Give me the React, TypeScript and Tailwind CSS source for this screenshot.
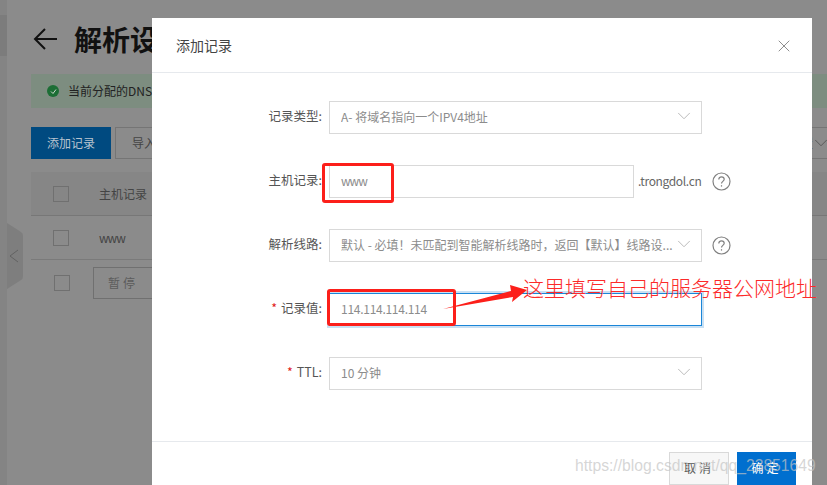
import { ChevronDown, X } from 'lucide-react'

const FONT = 'font-["Noto_Sans_CJK_SC","Liberation_Sans",sans-serif]'

function HelpIcon() {
  return (
    <svg width="19" height="19" viewBox="0 0 19 19" fill="none" stroke="#808080" strokeWidth="1.2">
      <circle cx="9.5" cy="9.5" r="8.5" />
      <path d="M6.8 7.4c0-1.6 1.2-2.6 2.7-2.6s2.7 1 2.7 2.4c0 2.2-2.7 2.2-2.7 4.4" />
      <path d="M9.5 13.2v1.4" />
    </svg>
  )
}

function FormRow({
  label,
  required,
  children
}: {
  label: string
  required?: boolean
  children: React.ReactNode
}) {
  return (
    <div className="flex h-[33px] items-center">
      <div className="flex w-[170px] shrink-0 items-center justify-end pb-[2px] pr-[7px] text-[12.5px] text-[#555]">
        {required && <span className="mr-1 text-[#e02020]">*</span>}
        {label}:
      </div>
      {children}
    </div>
  )
}

function SelectBox({ text }: { text: string }) {
  return (
    <div className="flex h-[33px] w-[373px] items-center justify-between border border-[#d9d9d9] pb-[2px] pl-[11px] pr-[6px] text-xs text-[#8c8c8c]">
      <span className="truncate">{text}</span>
      <ChevronDown size={22} strokeWidth={1} color="#b5b5b5" className="mt-[-1px] shrink-0" />
    </div>
  )
}

function Modal() {
  return (
    <div className="absolute left-[152px] top-[18px] flex h-[480px] w-[660px] flex-col bg-white">
      <div className="flex h-[55px] shrink-0 items-center justify-between border-b border-[#e6e9ed] pl-6 pr-[18px]">
        <span className="text-sm text-[#444]">添加记录</span>
        <X size={20} strokeWidth={1} color="#777" className="mt-[1px]" />
      </div>
      <div className="flex flex-col gap-[31px] pl-[7px] pt-[28px]">
        <FormRow label="记录类型">
          <SelectBox text="A- 将域名指向一个IPV4地址" />
        </FormRow>
        <FormRow label="主机记录">
          <div className="flex h-[33px] w-[305px] items-center border border-[#d9d9d9] pb-[2px] pl-[11px] text-xs tracking-[-1px] text-[#8c8c8c]">
            www
          </div>
          <span className="ml-[4px] w-[68px] pb-[2px] text-xs tracking-[-0.36px] text-[#666]">.trongdol.cn</span>
          <span className="ml-[6px]">
            <HelpIcon />
          </span>
        </FormRow>
        <FormRow label="解析线路">
          <SelectBox text="默认 - 必填！未匹配到智能解析线路时，返回【默认】线路设..." />
          <span className="ml-[10px]">
            <HelpIcon />
          </span>
        </FormRow>
        <FormRow label="记录值" required>
          <div className="flex h-[33px] w-[373px] items-center border border-[#1a86d8] pb-[2px] pl-[11px] text-xs tracking-[-0.27px] text-[#8c8c8c] shadow-[0_0_0_2px_#c9e0f3]">
            114.114.114.114
          </div>
        </FormRow>
        <FormRow label="TTL" required>
          <SelectBox text="10 分钟" />
        </FormRow>
      </div>
      <div className="mt-[51px] flex flex-1 justify-end gap-2 border-t border-[#e6e9ed] pr-4 pt-[10px]">
        <div className="flex h-[33px] w-[60px] items-center justify-center border border-[#d9d9d9] bg-[#f7f7f7] pb-[2px] text-xs tracking-[3px] text-[#555]">
          取消
        </div>
        <div className="flex h-[33px] w-[59px] items-center justify-center bg-[#006fcf] pb-[2px] text-xs tracking-[3px] text-white">
          确定
        </div>
      </div>
    </div>
  )
}

function Annotations() {
  return (
    <>
      <div className="absolute left-[322px] top-[163px] h-[40px] w-[72px] rounded-[3px] border-[3px] border-[#fc1f1a]" />
      <div className="absolute left-[327px] top-[289px] h-[37px] w-[129px] rounded-[3px] border-[3px] border-[#fc1f1a]" />
      <svg className="absolute left-[440px] top-[280px]" width="90" height="32" viewBox="0 0 90 32">
        <path d="M3 29 L71 11 L70 5 L87 10 L72 22 L73 17 Z" fill="#fc1f1a" />
      </svg>
      <span className="absolute left-[523px] top-[272px] whitespace-nowrap text-[21px] font-light leading-[30px] text-[#fc2a2a]">
        这里填写自己的服务器公网地址
      </span>
      <span className='absolute left-[575px] top-[456px] whitespace-nowrap font-["Liberation_Sans",sans-serif] text-[15.7px] leading-5 text-[#c4c4c4]/70'>
        https://blog.csdn.net/qq_23851649
      </span>
    </>
  )
}

function Background() {
  return (
    <div className="flex h-full w-full bg-[#8b8b8b] text-xs text-[#444]">
      <div className="flex w-[7px] shrink-0 flex-col bg-[#848484] pt-[15px]">
        <div className="h-[41px] bg-[#7c7c7c]" />
      </div>
      <div className="flex w-[24px] shrink-0 flex-col pt-[223px]">
        <svg width="16" height="66" viewBox="0 0 16 66">
          <path d="M0 0 L14 9 Q16 10 16 13 V53 Q16 56 14 57 L0 66 Z" fill="#7e7e7e" />
          <path d="M11 27 L3 33 L11 39" fill="none" stroke="#626262" />
        </svg>
      </div>
      <div className="flex min-w-0 flex-1 flex-col pt-[22px]">
        <div className="flex h-[34px] items-center gap-[16px] pl-[2px]">
          <svg width="25" height="24" viewBox="0 0 25 24" fill="none" stroke="#111" strokeWidth="2">
            <path d="M24 12H2 M12 2 L2 12 L12 22" />
          </svg>
          <span className="text-[28px] font-bold leading-none text-[#111]">解析设</span>
        </div>
        <div className="mt-[18px] flex h-[34px] items-center gap-[9px] bg-[#7d8d80] pl-4">
          <span className="flex size-3 items-center justify-center rounded-full bg-[#1c6e35]">
            <svg width="7" height="7" viewBox="0 0 7 7" fill="none" stroke="#cfd8cf">
              <path d="M1 3.5 L3 5.5 L6 1.5" />
            </svg>
          </span>
          <span className="text-[#222]">当前分配的DNS</span>
        </div>
        <div className="mt-[19px] flex h-8 gap-1">
          <div className="flex w-[80px] items-center justify-center bg-[#004a80] text-[#b9c4cf]">添加记录</div>
          <div className="flex flex-1 items-center justify-between border-y border-l border-[#757575] pl-4">
            <span>导入</span>
            <span className="mr-[-5px] flex items-center">
              <span className="mr-[-3px]">置</span>
              <ChevronDown size={22} strokeWidth={1} color="#555" />
            </span>
          </div>
        </div>
        <div className="mt-[13px] flex h-[44px] items-center border-b border-[#777] bg-[#868686] pl-[22px]">
          <div className="size-4 border border-[#707070]" />
          <span className="ml-[30px]">主机记录</span>
        </div>
        <div className="flex h-[44px] items-center border-b border-[#7a7a7a] pl-[22px]">
          <div className="size-4 border border-[#707070]" />
          <span className="ml-[30px] tracking-[-1px]">www</span>
        </div>
        <div className="flex h-[46px] items-center pl-[23px]">
          <div className="size-4 border border-[#707070]" />
          <div className="ml-[23px] flex h-8 w-[60px] items-center justify-center border border-[#707070] tracking-[3px] text-[#5c5c5c]">
            暂停
          </div>
        </div>
      </div>
    </div>
  )
}

export default function App() {
  return (
    <div className={`relative h-[485px] w-[827px] overflow-hidden ${FONT}`}>
      <Background />
      <Modal />
      <Annotations />
    </div>
  )
}
